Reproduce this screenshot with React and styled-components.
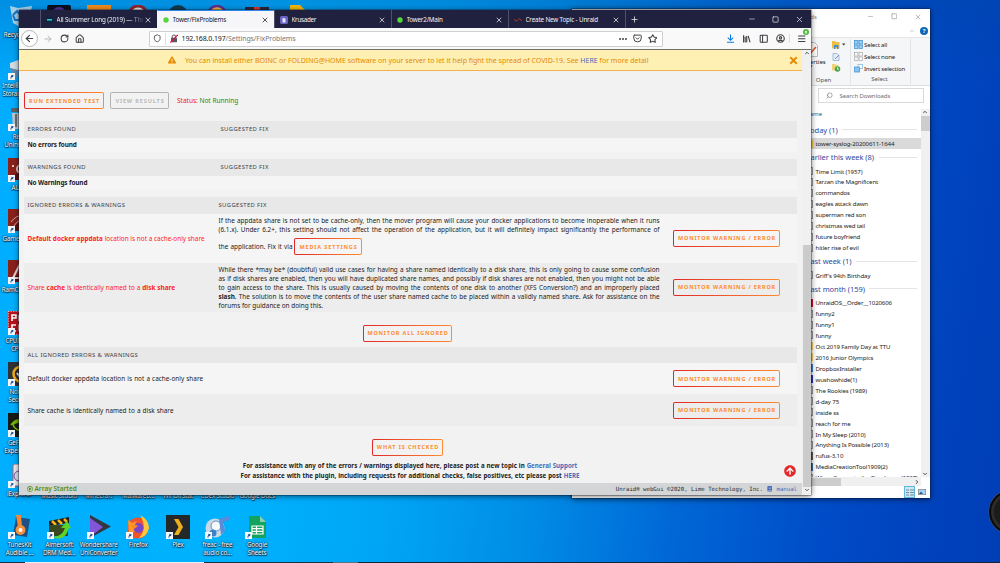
import React from "react";
import styled, { createGlobalStyle, css } from "styled-components";
import {
  ArrowLeft, ArrowRight, RotateCw, House, Shield, Ellipsis, Star, X, Plus, Minus, Square,
  Library, PanelLeft, CircleUser, Menu, Search, ChevronUp, ChevronDown, ChevronRight,
} from "lucide-react";
import { FaExclamationTriangle, FaTimes, FaArrowCircleUp, FaBook, FaRegPlayCircle } from "react-icons/fa";

const Global = createGlobalStyle`
  * { box-sizing: border-box; }
  body { margin: 0; overflow: hidden; font-family: "Noto Sans", "Open Sans", sans-serif; }
  svg { display: block; flex: none; }
`;

const Desktop = styled.main`
  position: relative;
  width: 1000px;
  height: 563px;
  overflow: hidden;
  background:
    linear-gradient(180deg, rgba(0, 70, 160, 0.3), rgba(0, 70, 160, 0) 90px),
    linear-gradient(98deg, #00adff 0%, #00b2fe 28%, #00a6f6 42%, #008ce6 56%, #0068d6 69%, #004cc8 83%, #0042bc 93%, #003eb6 100%);
`;

/* ---------- desktop shortcuts ---------- */

const IconColumn = styled.div`
  position: absolute;
  left: 0;
  top: 5px;
  width: 39px;
  display: grid;
  grid-auto-rows: 51px;
`;

const IconRow = styled.div`
  position: absolute;
  left: 0;
  top: ${(p) => p.$top}px;
  display: grid;
  grid-auto-flow: column;
  grid-auto-columns: 39.6px;
`;

const ShortcutBox = styled.div`
  display: flex;
  flex-direction: column;
  align-items: center;
  gap: 2px;
  width: 39px;
`;

const Tile = styled.div`
  position: relative;
  width: 24px;
  height: 24px;
  flex: none;
`;

const Arrow = styled.svg`
  position: absolute;
  left: 0;
  bottom: 0;
`;

const Caption = styled.div`
  color: #fff;
  font-size: 6.2px;
  line-height: 7.8px;
  letter-spacing: -0.12px;
  text-align: center;
  white-space: pre;
  text-shadow: 0 0 1px #001c33, 0.5px 0.7px 1px #001c33, 0 0 2px rgba(0, 20, 50, 0.9);
`;

function Shortcut({ caption, children, link = true }) {
  return (
    <ShortcutBox>
      <Tile>
        <svg width="24" height="24" viewBox="0 0 24 24">{children}</svg>
        {link && (
          <Arrow width="7" height="7" viewBox="0 0 7 7">
            <rect width="7" height="7" fill="#f7f9fb" />
            <path d="M1.500 6C1.400 4 2.400 3 4 3V1.800L6 3.600 4 5.200V4.200C2.800 4.200 2 4.800 1.500 6z" fill="#17509c" transform="rotate(-35 3.500 3.500)" />
          </Arrow>
        )}
      </Tile>
      {caption && <Caption>{caption}</Caption>}
    </ShortcutBox>
  );
}

const RedTile = ({ children }) => (
  <>
    <rect x="0" y="0" width="24" height="22" fill="#8a211b" />
    <path d="M0 22L24 4V22z" fill="#5a1310" />
    {children}
  </>
);

/* ---------- shared window parts ---------- */

const WindowFrame = styled.section`
  position: absolute;
  left: ${(p) => p.$x}px;
  top: ${(p) => p.$y}px;
  width: ${(p) => p.$w}px;
  height: ${(p) => p.$h}px;
  display: flex;
  flex-direction: column;
  overflow: hidden;
  box-shadow: 0 1px 6px rgba(0, 0, 0, 0.6), 0 0 0 0.5px rgba(20, 30, 60, 0.6);
`;

const WindowButtons = styled.div`
  display: flex;
  align-items: center;
  gap: 16.5px;
  color: ${(p) => p.$color};
`;

/* ---------- file explorer ---------- */

const ExplorerFrame = styled(WindowFrame)`
  background: #fff;
  color: #222;
  font-family: "Noto Sans", sans-serif;
  font-size: 6.1px;
`;

const ExplorerTitle = styled.div`
  height: 15px;
  flex: none;
  display: flex;
  align-items: center;
  justify-content: space-between;
  padding: 0 8.5px 0 213px;
  color: #888;
`;

const HelpStrip = styled.div`
  height: 13px;
  flex: none;
  display: flex;
  align-items: center;
  justify-content: flex-end;
  gap: 5px;
  padding-right: 2px;
  color: #8a8f94;
`;

const HelpDot = styled.span`
  width: 8px;
  height: 8px;
  border-radius: 50%;
  background: #0b67b8;
  color: #fff;
  font-size: 5.5px;
  line-height: 8px;
  font-weight: 700;
  text-align: center;
`;

const Ribbon = styled.div`
  height: 49px;
  flex: none;
  display: flex;
  padding-left: 221px;
  background: #f5f6f7;
  border-top: 1px solid #e4e5e6;
  border-bottom: 1px solid #dcddde;
`;

const OpenGroup = styled.div`
  width: 58px;
  height: 45px;
  margin-top: 1px;
  display: grid;
  grid-template-columns: 36px 1fr;
  grid-template-rows: 36px 10px;
  border-right: 1px solid #e2e3e4;
`;

const Properties = styled.div`
  display: flex;
  flex-direction: column;
  align-items: center;
  gap: 0.5px;
  padding-top: 3px;
  line-height: 7px;
`;

const OpenIcons = styled.div`
  display: flex;
  flex-direction: column;
  gap: 3.5px;
  padding: 2px 0 0 3px;
`;

const GroupName = styled.div`
  grid-column: 1 / -1;
  text-align: center;
  color: #555;
  line-height: 10px;
  letter-spacing: -0.1px;
  padding-left: ${(p) => p.$shift || 0}px;
  padding-right: ${(p) => p.$back || 0}px;
`;

const SelectGroup = styled.div`
  width: 60px;
  height: 45px;
  margin-top: 1px;
  padding: 0 0 0 3px;
  border-right: 1px solid #e2e3e4;
`;

const SelectLine = styled.div`
  display: flex;
  align-items: center;
  gap: 1px;
  height: 11.8px;
  letter-spacing: -0.2px;
  white-space: nowrap;
`;

const SearchStrip = styled.div`
  height: 22.5px;
  flex: none;
  display: flex;
  padding: 2px 6px 0 0;
  justify-content: flex-end;
`;

const SearchBox = styled.div`
  width: 106px;
  height: 15px;
  display: flex;
  align-items: center;
  gap: 6.5px;
  padding-left: 7px;
  border: 1px solid #d9d9d9;
  color: #6d6d6d;
  font-size: 6px;
  letter-spacing: -0.08px;
  svg { transform: scaleX(-1); }
`;

const ListArea = styled.div`
  flex: 1;
  min-height: 0;
  display: grid;
  grid-template-columns: 1fr 9px;
  padding-right: 0.5px;
`;

const FileList = styled.div`
  overflow: hidden;
  padding-left: 232px;
`;

const NameHead = styled.div`
  height: 13.1px;
  line-height: 10px;
  padding-left: 1px;
  color: #4c607a;
`;

const FileGroup = styled.div`
  height: 16.5px;
  display: flex;
  align-items: center;
  gap: 4.5px;
  color: #33489c;
  font-size: 7.5px;
  letter-spacing: -0.05px;
  white-space: nowrap;
  margin-left: 2.5px;
  &::after {
    content: "";
    flex: 1;
    height: 1px;
    margin-right: 4px;
    background: #e4e4e4;
  }
`;

const FileRow = styled.div`
  height: 10.96px;
  display: flex;
  align-items: center;
  gap: 3px;
  padding-left: 4px;
  letter-spacing: -0.13px;
  white-space: nowrap;
  background: ${(p) => (p.$selected ? "#d9d9d9" : "transparent")};
`;

const FileMark = styled.i`
  width: 5px;
  height: 8px;
  margin-left: -0.5px;
  background: ${(p) => p.$color};
  border: 1px solid ${(p) => p.$edge || p.$color};
`;

const Track = styled.div`
  display: flex;
  flex-direction: column;
  align-items: center;
  justify-content: space-between;
  background: #f0f0f0;
  color: #505050;
`;

const TrackThumb = styled.div`
  width: 100%;
  height: ${(p) => p.$h}px;
  background: #cdcdcd;
`;

const TrackTop = styled.div`
  width: 100%;
  display: flex;
  flex-direction: column;
  align-items: center;
  gap: 1px;
`;

const BottomTrack = styled.div`
  height: 9px;
  flex: none;
  margin-right: 9px;
  display: flex;
  align-items: center;
  justify-content: space-between;
  padding-right: 1px;
  background: #f0f0f0;
  color: #444;
`;

const BottomThumb = styled.div`
  width: 269px;
  height: 8px;
  background: #cdcdcd;
`;

const ViewStrip = styled.div`
  height: 12px;
  flex: none;
  display: flex;
  justify-content: flex-end;
  align-items: center;
  gap: 1px;
  padding-right: 3px;
`;

const ViewButton = styled.div`
  width: 11px;
  height: 12px;
  display: grid;
  place-items: center;
  background: ${(p) => (p.$on ? "#cce8f6" : "none")};
  border: ${(p) => (p.$on ? "1px solid #5fb8dc" : "0")};
`;

const thisWeek = ["Time Limit (1957)", "Tarzan the Magnificent", "commandos", "eagles attack dawn", "superman red son", "christmas wed tail", "future boyfriend", "hitler rise of evil"];
const lastMonth = [
  ["UnraidOS__Order__1020606", "#c8102e"], ["funny2"], ["funny1"], ["funny"],
  ["Oct 2019 Family Day at TTU", "#f4cf5b"], ["2016 Junior Olympics", "#f4cf5b"],
  ["DropboxInstaller", "#3a7fd0"], ["wushowhide(1)", "#2434b8"], ["The Rookies (1989)"], ["d-day 75"],
  ["inside ss"], ["reach for me"], ["In My Sleep (2010)"], ["Anything Is Possible (2013)"],
  ["rufus-3.10", "#5b5b4c"], ["MediaCreationTool1909(2)", "#3b6d8e"], ["When Comes to the Dead man (1987)"],
];

function File({ name, color, selected }) {
  return (
    <FileRow $selected={selected}>
      <FileMark $color={color || "#eceff1"} $edge={color ? undefined : "#9a9a9a"} />
      {name}
    </FileRow>
  );
}

const GridGlyph = ({ fill, stroke }) => (
  <svg width="9" height="9" viewBox="0 0 9 9">
    {[0.5, 5].map((x) => [0.5, 5].map((y) => (
      <rect key={`${x}${y}`} x={x} y={y} width="3.500" height="3.500" fill={fill} stroke={stroke} strokeWidth="0.700" />
    )))}
  </svg>
);

function Explorer() {
  return (
    <ExplorerFrame $x={572} $y={9} $w={358} $h={489}>
      <ExplorerTitle>
        <span>Downloads</span>
        <WindowButtons $color="#999">
          <Minus size={7} strokeWidth={2} /><Square size={6.5} strokeWidth={2.5} /><X size={8} strokeWidth={2} />
        </WindowButtons>
      </ExplorerTitle>
      <HelpStrip><ChevronUp size={6} /><HelpDot>?</HelpDot></HelpStrip>
      <Ribbon>
        <OpenGroup>
          <Properties>
            <svg width="13" height="15" viewBox="0 0 13 15">
              <path d="M1 .5H9.500L12.500 3.500V14.500H1z" fill="#fbfbfb" stroke="#aaa" strokeWidth=".8" />
              <path d="M2.500 7.500L5.500 11 11 5" fill="none" stroke="#e05a2b" strokeWidth="1.600" />
            </svg>
            <span>Properties</span>
            <svg width="4" height="3" viewBox="0 0 4 3"><path d="M0 .5H3.600L1.800 2.600z" fill="#333" /></svg>
          </Properties>
          <OpenIcons>
            <svg width="14" height="8" viewBox="0 0 14 8">
              <path d="M0 0H3L4 1H7.500V7.500H0z" fill="#efbd3f" /><path d="M2 4H6.500V8H5V6H3.500V8H2z" fill="#3e8fd6" />
              <path d="M10 2.500H13.400L11.700 4.600z" fill="#333" />
            </svg>
            <svg width="8" height="8" viewBox="0 0 8 8">
              <path d="M1 .5H5L7 2.500V7.500H1z" fill="#e3edf7" stroke="#8aa8c8" strokeWidth=".7" /><path d="M3 6L7 2" stroke="#7698c0" />
            </svg>
            <svg width="9" height="8" viewBox="0 0 9 8">
              <path d="M0 0H3L4 1H6.500V6.500H0z" fill="#efd37a" /><circle cx="5.500" cy="5" r="2.800" fill="#4ca84c" />
              <path d="M5.500 3.200V5.200H7" fill="none" stroke="#fff" strokeWidth=".8" />
            </svg>
          </OpenIcons>
          <GroupName $shift={4}>Open</GroupName>
        </OpenGroup>
        <SelectGroup>
          <SelectLine><GridGlyph fill="#9cd0f5" stroke="#2f8ad0" />Select all</SelectLine>
          <SelectLine><GridGlyph fill="#fafafa" stroke="#aaa" />Select none</SelectLine>
          <SelectLine>
            <svg width="9" height="9" viewBox="0 0 9 9">
              <rect x="4" y=".5" width="4.500" height="4" fill="#fff" stroke="#8abce4" strokeWidth=".8" />
              <rect x=".5" y="3" width="5" height="5" fill="#8ac4ef" stroke="#4a9ad8" strokeWidth=".8" />
            </svg>
            Invert selection
          </SelectLine>
          <GroupName $back={5}>Select</GroupName>
        </SelectGroup>
      </Ribbon>
      <SearchStrip>
        <SearchBox><Search size={7} strokeWidth={2} />Search Downloads</SearchBox>
      </SearchStrip>
      <ListArea>
        <FileList>
          <NameHead>Name</NameHead>
          <FileGroup>Today (1)</FileGroup>
          <File name="tower-syslog-20200611-1644" color="#f0c040" selected />
          <FileGroup>Earlier this week (8)</FileGroup>
          {thisWeek.map((n) => <File key={n} name={n} />)}
          <FileGroup>Last week (1)</FileGroup>
          <File name="Griff's 94th Birthday" />
          <FileGroup>Last month (159)</FileGroup>
          {lastMonth.map(([n, c]) => <File key={n} name={n} color={c} />)}
        </FileList>
        <Track>
          <TrackTop><ChevronUp size={6} strokeWidth={4} /><TrackThumb $h={15} /></TrackTop>
          <ChevronDown size={6} strokeWidth={4} />
        </Track>
      </ListArea>
      <BottomTrack><BottomThumb /><ChevronRight size={6} strokeWidth={4} /></BottomTrack>
      <ViewStrip>
        <ViewButton $on>
          <svg width="8" height="7" viewBox="0 0 8 7"><path d="M0 1H3M0 3.500H3M0 6H3M4 1H8M4 3.500H8M4 6H8" stroke="#67808f" strokeWidth=".9" /></svg>
        </ViewButton>
        <ViewButton>
          <svg width="8" height="6" viewBox="0 0 8 6"><rect x=".3" y=".3" width="7.400" height="5.400" fill="#a8d0ef" stroke="#777" strokeWidth=".6" /><path d="M1 5L3 2.500 5 5z" fill="#2b5a88" /></svg>
        </ViewButton>
      </ViewStrip>
    </ExplorerFrame>
  );
}

/* ---------- browser ---------- */

const TabBar = styled.div`
  height: 18px;
  flex: none;
  display: flex;
  align-items: stretch;
  padding-left: 20.5px;
  background: #20203f;
  color: #f2f2f6;
`;

const Tab = styled.div`
  width: 117px;
  display: flex;
  align-items: center;
  gap: 4px;
  padding: 1px 5px 0 5px;
  font-size: 6.3px;
  letter-spacing: ${(p) => p.$ls}px;
  white-space: nowrap;
  border-left: 1px solid #50506a;
  ${(p) => p.$active && css`
    background: #f6f6f8;
    color: #15141a;
    border-left-color: #f6f6f8;
    border-top: 1px solid #2b86e8;
    padding-top: 0;
  `}
`;

const TabName = styled.span`
  flex: 1;
  overflow: hidden;
  margin-right: -3px;
  ${(p) => p.$fade && css`mask-image: linear-gradient(90deg, #000 82%, rgba(0, 0, 0, 0.15));`}
`;

const NewTab = styled.div`
  flex: 1;
  display: flex;
  align-items: center;
  padding-left: 4px;
  border-left: 1px solid #50506a;
`;

const TitleButtons = styled(WindowButtons)`
  padding-right: 7.5px;
  gap: 16px;
`;

const Toolbar = styled.div`
  height: 22px;
  flex: none;
  display: grid;
  grid-template-columns: 130px 514px 1fr;
  align-items: center;
  background: #f9f9fa;
  border-bottom: 1px solid #73706a;
  color: #3f3f44;
`;

const NavButtons = styled.div`
  display: flex;
  align-items: center;
  padding-left: 2px;
  gap: 6.5px;
`;

const BackButton = styled.div`
  width: 17px;
  height: 17px;
  margin-right: -1.5px;
  display: grid;
  place-items: center;
  border: 1px solid #b8b8bb;
  border-radius: 50%;
  background: #fff;
`;

const UrlBar = styled.div`
  height: 16px;
  display: flex;
  align-items: center;
  padding: 0 5px 0 3px;
  background: #fff;
  border: 1px solid #cfcfd2;
  border-radius: 1px;
`;

const UrlIcons = styled.div`
  display: flex;
  align-items: center;
  gap: ${(p) => p.$gap}px;
`;

const Divider = styled.i`
  width: 1px;
  height: 12px;
  background: #e0e0e2;
`;

const Url = styled.span`
  flex: 1;
  padding-left: 4px;
  font-size: 7px;
  letter-spacing: -0.12px;
  color: #18181c;
  em { font-style: normal; color: #77777c; letter-spacing: -0.11px; }
`;

const ToolIcons = styled.div`
  display: flex;
  align-items: center;
  justify-content: flex-end;
  gap: 7.2px;
  padding-right: 5px;
`;

const MenuHolder = styled.div`
  position: relative;
  margin-left: -3.5px;
  padding-left: 7px;
  border-left: 1px solid #dcdcde;
`;

const UpdateBadge = styled.div`
  position: absolute;
  right: -3px;
  top: -4.5px;
  width: 6px;
  height: 6px;
  display: grid;
  place-items: center;
  border-radius: 50%;
  background: #4fb83a;
`;

const Viewport = styled.div`
  flex: 1;
  min-height: 0;
  display: grid;
  grid-template-columns: 1fr 9px;
  grid-template-rows: 100%;
`;

const Page = styled.div`
  display: flex;
  flex-direction: column;
  min-height: 0;
  background: #f2f2f2;
  color: #1c1b1b;
  font-size: 6.4px;
`;

const Banner = styled.div`
  height: 21px;
  flex: none;
  display: flex;
  align-items: center;
  padding: 0 3.5px 0 149px;
  background: #feefb3;
  border-bottom: 1px solid #f3b04c;
  color: #e68a00;
`;

const BannerText = styled.div`
  width: 462px;
  margin: 0 auto 0 9px;
  font-size: 7px;
  white-space: nowrap;
  text-align-last: justify;
`;

const Link = styled.span`
  color: #486dba;
`;

const ActionButton = styled.button`
  width: ${(p) => p.$w}px;
  height: 17px;
  flex: none;
  padding: 0 0 0 1px;
  border: 1px solid transparent;
  border-radius: 2px;
  background:
    linear-gradient(${(p) => p.$face || "#f2f2f2"}, ${(p) => p.$face || "#f2f2f2"}) padding-box,
    ${(p) => (p.$disabled ? "linear-gradient(#b4b4b4, #b4b4b4)" : "linear-gradient(90deg, #e22828, #ff8c2f)")} border-box;
  color: ${(p) => (p.$disabled ? "#b8b8b8" : "#ff8c2f")};
  font: 700 5.5px/14px "Noto Sans", sans-serif;
  letter-spacing: ${(p) => p.$ls || 0.88}px;
  white-space: nowrap;
`;

const Actions = styled.div`
  height: 50px;
  flex: none;
  display: flex;
  align-items: flex-end;
  gap: 6px;
  padding: 0 0 12px 5px;
`;

const Status = styled.div`
  padding-left: 2px;
  line-height: 17px;
  font-size: 6.5px;
  color: #f0142f;
  b { font-weight: 400; color: #128a1e; }
`;

const Section = styled.div`
  margin: 0 5px ${(p) => p.$gap || 0}px;
  flex: none;
`;

const TableRow = styled.div`
  height: ${(p) => p.$h}px;
  display: grid;
  grid-template-columns: ${(p) => p.$first || 191}px 442px 1fr;
  align-items: center;
  padding-left: 3.5px;
  background: ${(p) => p.$bg || "#f5f5f5"};
  white-space: nowrap;
`;

const HeadRow = styled(TableRow)`
  background: #e8e8e8;
  color: #3c4046;
  font-size: 5.9px;
  letter-spacing: 0.36px;
`;

const Cell = styled.div`
  width: ${(p) => (p.$w ? `${p.$w}px` : "auto")};
  color: ${(p) => (p.$red ? "#ff1c1c" : "inherit")};
  font-size: 6.4px;
  letter-spacing: ${(p) => p.$ls || 0}px;
  text-align-last: ${(p) => (p.$w ? "justify" : "left")};
`;

const Fix = styled.div`
  line-height: 9px;
  font-size: 6.4px;
`;

const Line = styled.div`
  width: ${(p) => p.$w || 441}px;
  white-space: nowrap;
  text-align-last: justify;
`;

const FixAction = styled.div`
  display: flex;
  align-items: center;
  gap: 1.5px;
  margin: 4.8px 0 5px;
`;

const ButtonCell = styled.div`
  padding-left: 12.5px;
  display: flex;
  grid-column: 3;
`;

const Centered = styled.div`
  height: ${(p) => p.$h}px;
  flex: none;
  display: flex;
  justify-content: center;
  align-items: flex-end;
  padding: 0 6px ${(p) => p.$bottom || 0}px 0;
`;

const Help = styled.div`
  position: relative;
  flex: 1;
  min-height: 0;
  display: flex;
  flex-direction: column;
  align-items: center;
  padding: 5.5px 1px 0 0;
  line-height: 9.4px;
  font-weight: 700;
  font-size: 6.2px;
`;

const TopButton = styled.div`
  position: absolute;
  right: 6px;
  top: 9px;
  color: #e22828;
`;

const Footer = styled.footer`
  height: 12.5px;
  flex: none;
  display: flex;
  align-items: center;
  justify-content: space-between;
  padding: 0 5px 0 8px;
  background: #d4d5d6;
  color: #2b2a29;
`;

const ArrayState = styled.div`
  display: flex;
  align-items: center;
  gap: 1.5px;
  color: #4f9016;
  font-weight: 600;
  font-size: 6.5px;
`;

const Legal = styled.div`
  display: flex;
  align-items: center;
  gap: 4px;
  font: 5.7px "DejaVu Sans Mono", "Liberation Mono", monospace;
`;

const PageTrack = styled(Track)`
  padding-bottom: 2px;
`;

const PageThumb = styled.div`
  width: 8px;
  height: 242px;
  margin-top: auto;
  background: #cbcbcb;
`;

const FavDot = () => <svg width="6" height="6"><circle cx="3" cy="3" r="2.700" fill="#55d63c" /></svg>;

const tabs = [
  { name: "All Summer Long (2019) — The M", ls: -0.1, fade: true, icon: <svg width="7" height="6"><rect width="7" height="6" rx="1" fill="#0d253f" /><rect x="1" y="2" width="5" height="1.600" fill="#2fc4c8" /></svg> },
  { name: "Tower/FixProblems", ls: -0.17, active: true, icon: <FavDot /> },
  { name: "Krusader", ls: -0.3, icon: <svg width="8" height="8"><rect width="8" height="8" rx="1.500" fill="#6a63c4" /><path d="M2.500 6.500V2L5.500 2.500V6.500z" fill="#e6e4fa" /></svg> },
  { name: "Tower2/Main", ls: -0.22, icon: <FavDot /> },
  { name: "Create New Topic - Unraid", ls: -0.16, icon: <svg width="8" height="6" viewBox="0 0 9 6"><path d="M.5 2Q2 6 4.200 3T8.500 4" fill="none" stroke="#c8401f" strokeWidth="1" /></svg> },
];

const Monitor = ({ face }) => (
  <ButtonCell><ActionButton $w={107} $ls={0.8} $face={face}>MONITOR WARNING / ERROR</ActionButton></ButtonCell>
);

function Browser() {
  return (
    <WindowFrame $x={19} $y={10} $w={792} $h={485}>
      <TabBar>
        {tabs.map((t) => (
          <Tab key={t.name} $active={t.active} $ls={t.ls}>
            {t.icon}<TabName $fade={t.fade}>{t.name}</TabName><X size={8} strokeWidth={2.2} />
          </Tab>
        ))}
        <NewTab><Plus size={9} strokeWidth={2} /></NewTab>
        <TitleButtons $color="#d8d8e0">
          <Minus size={8} strokeWidth={2} /><Square size={7} strokeWidth={2.6} /><X size={9} strokeWidth={2} />
        </TitleButtons>
      </TabBar>
      <Toolbar>
        <NavButtons>
          <BackButton><ArrowLeft size={11} strokeWidth={2.4} /></BackButton>
          <ArrowRight size={10} color="#b0b0b2" strokeWidth={2.2} />
          <RotateCw size={9} strokeWidth={2.8} />
          <House size={9.5} strokeWidth={2.6} />
        </NavButtons>
        <UrlBar>
          <UrlIcons $gap={3.5}>
            <Shield size={8.5} strokeWidth={2.4} /><Divider />
            <svg width="8" height="9" viewBox="0 0 8 9">
              <path d="M2.200 4V2.800a1.800 1.800 0 0 1 3.600 0V4" fill="none" stroke="#58585c" /><rect x="1" y="3.800" width="6" height="4.400" rx=".5" fill="#58585c" />
              <path d="M.3 8.500L7.700.8" stroke="#e0124a" strokeWidth="1.200" />
            </svg>
          </UrlIcons>
          <Url>192.168.0.197<em>/Settings/FixProblems</em></Url>
          <UrlIcons $gap={5.3}>
            <Ellipsis size={10} strokeWidth={3} />
            <svg width="9" height="9" viewBox="0 0 24 24" fill="none" stroke="currentColor" strokeWidth="2.600" strokeLinecap="round" strokeLinejoin="round">
              <path d="M4 3h16a2 2 0 0 1 2 2v6a10 10 0 0 1-20 0V5a2 2 0 0 1 2-2z" /><path d="M8 10l4 4 4-4" />
            </svg>
            <Star size={9.5} strokeWidth={2.6} />
          </UrlIcons>
        </UrlBar>
        <ToolIcons>
          <svg width="9" height="9" viewBox="0 0 9 9" fill="none" stroke="#0a7be6" strokeWidth="1.100"><path d="M4.500.5V6M1.800 3.700L4.500 6.300 7.200 3.700M1 8.300H8" /></svg>
          <Library size={9.5} strokeWidth={2.8} />
          <PanelLeft size={9.5} strokeWidth={2.6} />
          <CircleUser size={9} strokeWidth={3} />
          <MenuHolder><Menu size={9.5} strokeWidth={2.8} /><UpdateBadge><svg width="4" height="4" viewBox="0 0 4 4"><path d="M2 .4L3.600 2.200H2.500V3.700H1.500V2.200H.4z" fill="#fff" /></svg></UpdateBadge></MenuHolder>
        </ToolIcons>
      </Toolbar>
      <Viewport>
        <Page>
          <Banner>
            <FaExclamationTriangle size={8} />
            <BannerText>You can install either BOINC or FOLDING@HOME software on your server to let it help fight the spread of COVID-19. See <Link>HERE</Link> for more detail</BannerText>
            <FaTimes size={11} />
          </Banner>
          <Actions>
            <ActionButton $w={80}>RUN EXTENDED TEST</ActionButton>
            <ActionButton $w={59} $disabled>VIEW RESULTS</ActionButton>
            <Status>Status: <b>Not Running</b></Status>
          </Actions>
          <Section $gap={7}>
            <HeadRow $h={16.6} $first={193}><span>ERRORS FOUND</span><span>SUGGESTED FIX</span></HeadRow>
            <TableRow $h={14.4}><Cell $ls={-0.1}><b>No errors found</b></Cell></TableRow>
          </Section>
          <Section $gap={7}>
            <HeadRow $h={16.6} $first={193}><span>WARNINGS FOUND</span><span>SUGGESTED FIX</span></HeadRow>
            <TableRow $h={14.4}><Cell $ls={-0.1}><b>No Warnings found</b></Cell></TableRow>
          </Section>
          <Section>
            <HeadRow $h={16.6}><span>IGNORED ERRORS &amp; WARNINGS</span><span>SUGGESTED FIX</span></HeadRow>
            <TableRow $h={49}>
              <Cell $w={177} $red><b>Default docker appdata</b> location is not a cache-only share</Cell>
              <Fix>
                <Line>If the appdata share is not set to be cache-only, then the mover program will cause your docker applications to become inoperable when it runs</Line>
                <Line>(6.1.x). Under 6.2+, this setting should not affect the operation of the application, but it will definitely impact significantly the performance of</Line>
                <FixAction><Line $w={74}>the application. Fix it via</Line><ActionButton $w={68} $face="#f5f5f5">MEDIA SETTINGS</ActionButton></FixAction>
              </Fix>
              <Monitor face="#f5f5f5" />
            </TableRow>
            <TableRow $h={49} $bg="#ededed">
              <Cell $w={147.5} $red>Share <b>cache</b> is identically named to a <b>disk share</b></Cell>
              <Fix>
                <Line>While there *may be* (doubtful) valid use cases for having a share named identically to a disk share, this is only going to cause some confusion</Line>
                <Line>as if disk shares are enabled, then you will have duplicated share names, and possibly if disk shares are not enabled, then you might not be able</Line>
                <Line>to gain access to the share. This is usually caused by moving the contents of one disk to another (XFS Conversion?) and an improperly placed</Line>
                <Line><b>slash</b>. The solution is to move the contents of the user share named cache to be placed within a validly named share. Ask for assistance on the</Line>
                <Line $w={104.5}>forums for guidance on doing this.</Line>
              </Fix>
              <Monitor face="#ededed" />
            </TableRow>
          </Section>
          <Centered $h={35} $bottom={5}><ActionButton $w={89} $ls={0.82}>MONITOR ALL IGNORED</ActionButton></Centered>
          <Section>
            <HeadRow $h={16.6}><span>ALL IGNORED ERRORS &amp; WARNINGS</span></HeadRow>
            <TableRow $h={31.3}><Cell $w={175.5}>Default docker appdata location is not a cache-only share</Cell><Monitor face="#f5f5f5" /></TableRow>
            <TableRow $h={31.3} $bg="#ededed"><Cell $w={146}>Share cache is identically named to a disk share</Cell><Monitor face="#ededed" /></TableRow>
          </Section>
          <Centered $h={30}><ActionButton $w={71}>WHAT IS CHECKED</ActionButton></Centered>
          <Help>
            <Line $w={334.5}>For assistance with any of the errors / warnings displayed here, please post a new topic in <Link>General Support</Link></Line>
            <Line $w={339}>For assistance with the plugin, including requests for additional checks, false positives, etc please post <Link>HERE</Link></Line>
            <TopButton><FaArrowCircleUp size={12} /></TopButton>
          </Help>
          <Footer>
            <ArrayState><FaRegPlayCircle size={6} />Array Started</ArrayState>
            <Legal>Unraid® webGui ©2020, Lime Technology, Inc. <Link><FaBook size={5.5} /></Link><Link>manual</Link></Legal>
          </Footer>
        </Page>
        <PageTrack>
          <TrackTop><ChevronUp size={6} strokeWidth={4} /></TrackTop>
          <PageThumb />
          <ChevronDown size={6} strokeWidth={4} />
        </PageTrack>
      </Viewport>
    </WindowFrame>
  );
}

const Taskbar = styled.div`
  position: absolute;
  left: 0;
  bottom: 0;
  width: 100%;
  height: 1px;
  background: linear-gradient(90deg, #17334a 25px, #e8eef2 25px 204px, #17334a 204px 333px, #557585 333px 358px, #10243a 358px);
`;

const Knob = styled.div`
  position: absolute;
  left: 989px;
  top: 490px;
  width: 44px;
  height: 44px;
  border-radius: 50%;
  background: #1b1b1c;
  border: 2px solid #090909;
  box-shadow: 0 0 0 0.5px #555, inset 0 0 0 3px #2c2c2d;
`;

export default function App() {
  return (
    <Desktop>
      <Global />
      <IconRow $top={5}>
        <ShortcutBox />
        <Shortcut link={false}><rect width="24" height="20" rx="4" y="-1" fill="#0b1020" /><circle cx="12" cy="9" r="7" fill="#5533a0" /></Shortcut>
        <Shortcut link={false}><rect width="24" height="20" y="-1" fill="#f08a1c" /></Shortcut>
        <Shortcut link={false}><circle cx="12" cy="10" r="9" fill="#e8e4e0" stroke="#8a2430" strokeWidth="3" /></Shortcut>
        <Shortcut link={false}><circle cx="12" cy="10" r="10" fill="#103a50" /></Shortcut>
        <Shortcut link={false}><circle cx="12" cy="10" r="9" fill="#f0b040" stroke="#5a2e90" strokeWidth="2.500" /></Shortcut>
        <Shortcut link={false}><rect y="2" width="24" height="18" fill="#2a2838" /><rect x="9" y="2" width="6" height="18" fill="#d8342c" /></Shortcut>
        <Shortcut link={false}><path d="M5 0H15L21 6V24H5z" fill="#f4b80c" /></Shortcut>
      </IconRow>
      <IconColumn>
        <Shortcut link={false} caption="Recycle Bin">
          <path d="M2 1L10 3 24 1 20 20 12 22 5 18z" fill="#cfe0ea" opacity=".8" /><path d="M5 10l4-4 2 3M5 10l2 5h4" fill="none" stroke="#1673c8" strokeWidth="2" />
        </Shortcut>
        <Shortcut caption={"Intel® Rapid\nStorage Te..."}>
          <path d="M2 7L16 2 24 5V11L10 15 2 12z" fill="#d6dde2" /><path d="M2 12L10 14V22L4 20z" fill="#5f8ab0" /><path d="M10 14L24 9V18L11 22z" fill="#96abc0" />
        </Shortcut>
        <Shortcut caption={"Revo\nUninstaller"}>
          <rect x="3" y="1" width="20" height="4" fill="#5d6166" /><path d="M4 6H23V22H5z" fill="#c2c6c9" /><path d="M8 7V20M12 7V20" stroke="#6c7176" strokeWidth="2" />
        </Shortcut>
        <Shortcut caption="AURA"><RedTile><circle cx="13" cy="11" r="4" fill="none" stroke="#d8caca" strokeWidth="2" /><circle cx="5" cy="8" r="1" fill="#fff" /></RedTile></Shortcut>
        <Shortcut caption="GameFirst V"><RedTile><path d="M3 13Q8 6 16 6M6 17Q10 10 18 10" fill="none" stroke="#c6a8a4" /></RedTile></Shortcut>
        <Shortcut caption="RamCache II"><RedTile><path d="M5 18L12 4V12H18V18z" fill="none" stroke="#e2d8d6" strokeWidth="2" /></RedTile></Shortcut>
        <Shortcut caption={"CPUID RO\nCPU-Z"}>
          <rect width="24" height="24" fill="#b8141e" stroke="#fff" strokeDasharray="1.500 1" />
          <path d="M4 10V4H8V7H4M11 4V10M11 4H15M11 7H14M8 14H4V20H8M11 20V14H15V17H11" fill="none" stroke="#fff" strokeWidth="1.600" />
        </Shortcut>
        <Shortcut caption={"Norton\nSecurity"}><rect width="24" height="24" fill="#2f3337" /><circle cx="13" cy="12" r="7.500" fill="none" stroke="#f5b01a" strokeWidth="2.500" /><path d="M9 11l3 4 6-7" fill="none" stroke="#fff" strokeWidth="2" /></Shortcut>
        <Shortcut caption={"GeForce\nExperience"}><rect width="24" height="24" fill="#171b16" /><path d="M3 12Q8 5 15 8T20 14Q12 20 7 15T11 9" fill="none" stroke="#76b900" strokeWidth="1.600" /></Shortcut>
        <Shortcut caption="iExplorer"><rect x="5" y="0" width="16" height="22" rx="2" fill="#eee" stroke="#b8626c" /><circle cx="11" cy="12" r="5" fill="#dce5ef" stroke="#7c4e9c" /></Shortcut>
      </IconColumn>
      <IconRow $top={466}>
        <ShortcutBox />
        {["Music Studio", "Minecraft", "Malwareb...", "WinDirStat", "CDex Studio", "Google Docs"].map((c) => (
          <Shortcut key={c} link={false} caption={c} />
        ))}
      </IconRow>
      <IconRow $top={515}>
        <Shortcut caption={"TunesKit\nAudible ..."}>
          <path d="M8 2L22 4 19 22 5 20z" fill="#1d5083" /><path d="M8 0H13L14 12H10z" fill="#f08a32" /><circle cx="12.500" cy="15" r="5" fill="#f3903c" /><circle cx="12.500" cy="15" r="2" fill="#fff" />
        </Shortcut>
        <Shortcut caption={"Aimersoft\nDRM Med..."}>
          <path d="M2 6L22 2V8L2 11z" fill="#20211c" /><path d="M5 6l4 4M11 5l4 4M17 4l3 3" stroke="#f5b61c" strokeWidth="2.500" /><rect x="2" y="10" width="19" height="11" fill="#38481f" />
          <path d="M3 21Q14 24 18 13H14L20 6 24 13H22Q18 26 8 23z" fill="#5ed227" />
        </Shortcut>
        <Shortcut caption={"Wondershare\nUniConverter"}>
          <path d="M3 0L24 11.500 3 23z" fill="#343642" /><path d="M3 3L16 12 3 22z" fill="#8356d8" />
        </Shortcut>
        <Shortcut caption="Firefox">
          <circle cx="12" cy="13" r="10.500" fill="#f0542d" /><path d="M14 0Q23 5 23 13Q21 22 13 23Q22 13 14 0z" fill="#ffc83c" /><path d="M2 5L6 8 11 6Q7 10 11 16L3 18z" fill="#ff9b2b" /><circle cx="12.500" cy="13" r="5" fill="#7a45c8" /><path d="M4 11Q8 8 12 11L8 14z" fill="#ff8a24" />
        </Shortcut>
        <Shortcut caption="Plex"><rect width="24" height="24" fill="#25282b" /><path d="M8 4H12.500L17 12 12.500 20H8L12.500 12z" fill="#ebaf1e" /></Shortcut>
        <Shortcut caption={"freac - free\naudio co..."}>
          <circle cx="10" cy="13" r="9.500" fill="#cbd9e6" /><circle cx="11" cy="11" r="5" fill="#f6fafd" stroke="#5f92c2" /><circle cx="8" cy="18" r="3.500" fill="#3a83c6" /><path d="M14 4L24 1V5L18 7 20 16 16 20z" fill="#5a8cd8" />
        </Shortcut>
        <Shortcut caption={"Google\nSheets"}>
          <path d="M4 1H15L21 7V23H4z" fill="#12a35f" /><path d="M15 1L21 7H15z" fill="#8bd1b1" /><path d="M7 11H18V19H7zM7 13.700H18M7 16.400H18M11.500 11V19" fill="none" stroke="#fff" strokeWidth="1.200" />
        </Shortcut>
      </IconRow>
      <Knob />
      <Explorer />
      <Browser />
      <Taskbar />
    </Desktop>
  );
}
